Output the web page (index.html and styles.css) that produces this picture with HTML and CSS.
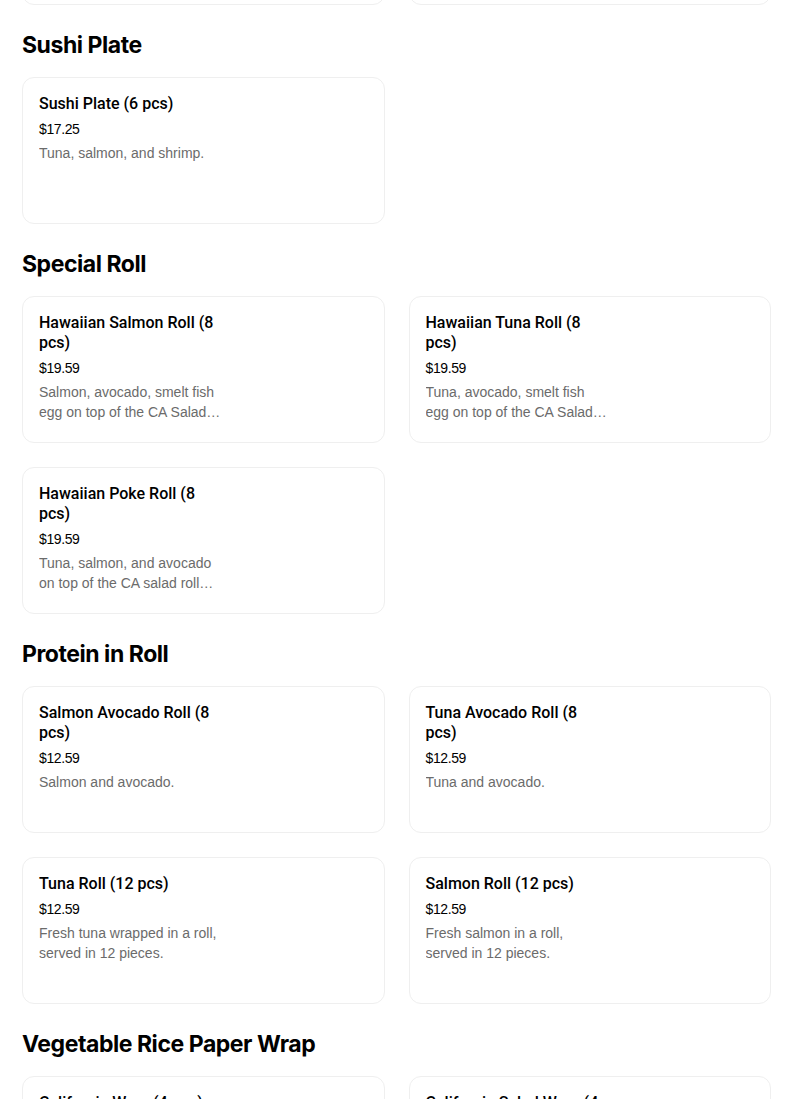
FILE: index.html
```html
<!DOCTYPE html>
<html>
<head>
<meta charset="utf-8">
<link rel="stylesheet" href="styles.css">
</head>
<body>
<main class="menu">
  <section class="section section-first">
    <div class="grid">
      <div class="card"><div class="info"><div class="title">Spicy Salmon Roll (8 pcs)</div><div class="price">$12.59</div><div class="desc">Spicy salmon and cucumber.</div></div></div>
      <div class="card"><div class="info"><div class="title">Spicy Tuna Roll (8 pcs)</div><div class="price">$12.59</div><div class="desc">Spicy tuna and cucumber.</div></div></div>
    </div>
  </section>

  <section class="section">
    <h2 class="heading">Sushi Plate</h2>
    <div class="grid">
      <div class="card"><div class="info"><div class="title">Sushi Plate (6 pcs)</div><div class="price">$17.25</div><div class="desc">Tuna, salmon, and shrimp.</div></div></div>
    </div>
  </section>

  <section class="section">
    <h2 class="heading">Special Roll</h2>
    <div class="grid">
      <div class="card"><div class="info"><div class="title">Hawaiian Salmon Roll (8 pcs)</div><div class="price">$19.59</div><div class="desc">Salmon, avocado, smelt fish egg on top of the CA Salad roll with house sauce.</div></div></div>
      <div class="card"><div class="info"><div class="title">Hawaiian Tuna Roll (8 pcs)</div><div class="price">$19.59</div><div class="desc">Tuna, avocado, smelt fish egg on top of the CA Salad roll with house sauce.</div></div></div>
      <div class="card"><div class="info"><div class="title">Hawaiian Poke Roll (8 pcs)</div><div class="price">$19.59</div><div class="desc">Tuna, salmon, and avocado on top of the CA salad roll with poke sauce.</div></div></div>
    </div>
  </section>

  <section class="section">
    <h2 class="heading">Protein in Roll</h2>
    <div class="grid">
      <div class="card"><div class="info"><div class="title">Salmon Avocado Roll (8 pcs)</div><div class="price">$12.59</div><div class="desc">Salmon and avocado.</div></div></div>
      <div class="card"><div class="info"><div class="title">Tuna Avocado Roll (8 pcs)</div><div class="price">$12.59</div><div class="desc">Tuna and avocado.</div></div></div>
      <div class="card"><div class="info"><div class="title">Tuna Roll (12 pcs)</div><div class="price">$12.59</div><div class="desc">Fresh tuna wrapped in a roll, served in 12 pieces.</div></div></div>
      <div class="card"><div class="info"><div class="title">Salmon Roll (12 pcs)</div><div class="price">$12.59</div><div class="desc">Fresh salmon in a roll, served in 12 pieces.</div></div></div>
    </div>
  </section>

  <section class="section">
    <h2 class="heading">Vegetable Rice Paper Wrap</h2>
    <div class="grid">
      <div class="card"><div class="info"><div class="title">California Wrap (4 pcs)</div><div class="price">$10.99</div><div class="desc">Crab salad, avocado, and cucumber wrapped in rice paper.</div></div></div>
      <div class="card"><div class="info"><div class="title">California Salad Wrap (4 pcs)</div><div class="price">$10.99</div><div class="desc">Crab salad, lettuce, and avocado wrapped in rice paper.</div></div></div>
    </div>
  </section>
</main>
</body>
</html>
```

FILE: styles.css
```css
html, body {
  margin: 0;
  padding: 0;
  background: #ffffff;
  overflow: hidden;
}
body {
  font-family: "Liberation Sans", Arial, sans-serif;
  color: #000000;
}
.menu {
  width: 749px;
  margin: -142px 0 0 22px;
}
.section {
  margin-top: 24px;
}
.section-first {
  margin-top: 0;
}
.heading {
  margin: 0 0 16px 0;
  font-family: Inter, "Liberation Sans", sans-serif;
  font-size: 23px;
  line-height: 32px;
  font-weight: 700;
  letter-spacing: -0.45px;
}
.grid {
  display: grid;
  grid-template-columns: 1fr 1fr;
  gap: 24px;
}
.card {
  box-sizing: border-box;
  height: 147px;
  border: 1px solid #efefef;
  border-radius: 12px;
  padding: 16px;
  overflow: hidden;
}
.info {
  width: 183px;
}
.title {
  width: 180px;
  font-family: Roboto, "Liberation Sans", sans-serif;
  font-size: 16px;
  line-height: 20px;
  font-weight: 500;
  color: #000;
}
.price {
  margin-top: 5px;
  font-size: 14px;
  line-height: 20px;
  color: #000;
  letter-spacing: -0.4px;
}
.desc {
  margin-top: 4px;
  font-size: 14px;
  line-height: 20px;
  color: #6b6b6b;
  display: -webkit-box;
  -webkit-line-clamp: 2;
  -webkit-box-orient: vertical;
  overflow: hidden;
}
```
